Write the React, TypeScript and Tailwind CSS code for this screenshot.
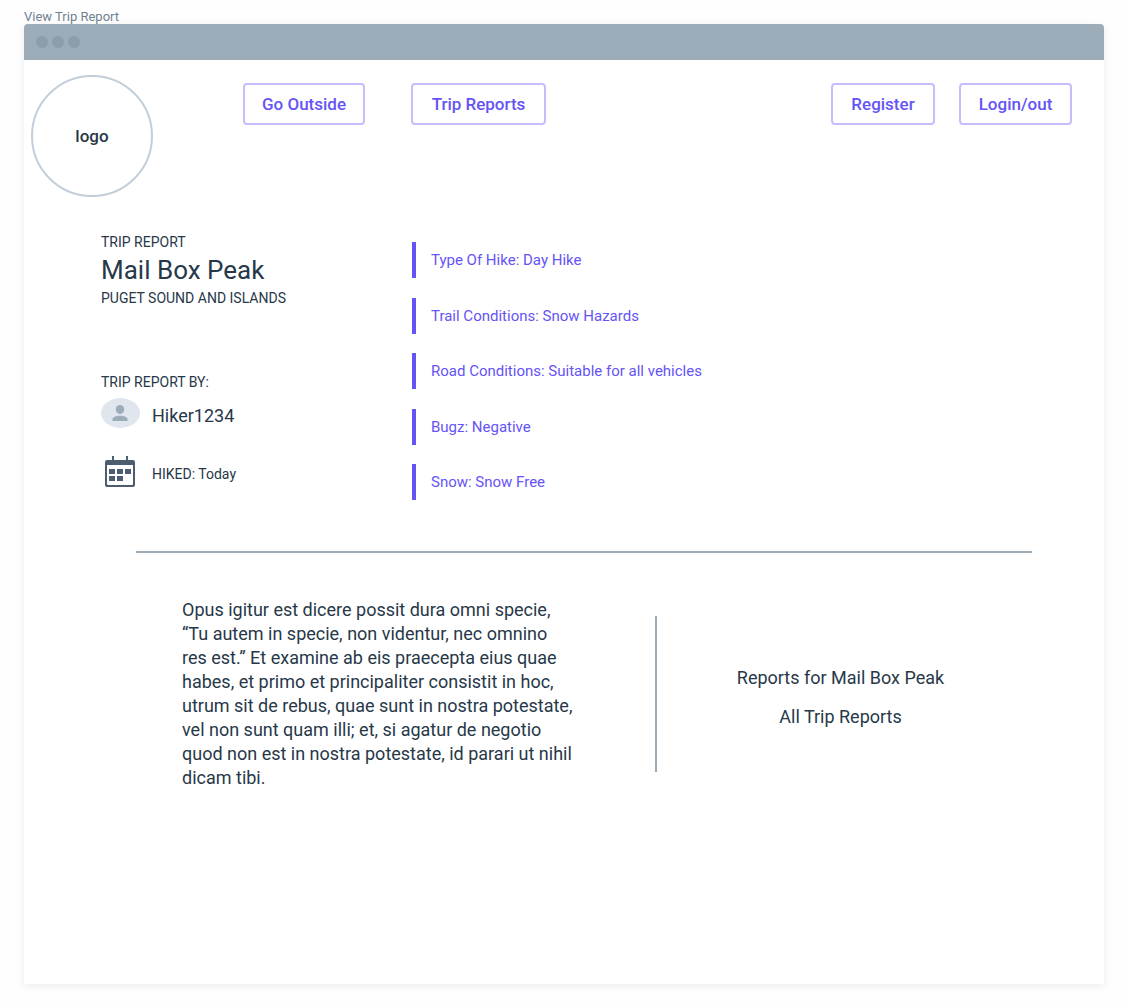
const conditions = [
  'Type Of Hike: Day Hike',
  'Trail Conditions: Snow Hazards',
  'Road Conditions: Suitable for all vehicles',
  'Bugz: Negative',
  'Snow: Snow Free',
];

function NavButton({ label, className }: { label: string; className: string }) {
  return (
    <button
      type="button"
      className={`h-[42px] rounded-[4px] border-2 border-[#c5befc] text-center text-[17px] leading-6 font-medium text-[#6554f5] ${className}`}
    >
      {label}
    </button>
  );
}

function Avatar() {
  return (
    <svg width="39" height="30" viewBox="0 0 39 30" aria-hidden="true">
      <ellipse cx="19.5" cy="15" rx="19.5" ry="15" fill="#dfe6ee" />
      <ellipse cx="19" cy="11.500" rx="4.200" ry="4.500" fill="#9dacb9" />
      <path d="M11.500 23v-2c0-2 3.500-3.300 7.500-3.300s7.500 1.300 7.500 3.300v2z" fill="#9dacb9" />
    </svg>
  );
}

function Calendar() {
  return (
    <svg width="30" height="31" viewBox="0 0 30 31" fill="#4b5d6e" aria-hidden="true">
      <path
        fillRule="evenodd"
        d="M7 0h2v4h12V0h2v4h5a2 2 0 0 1 2 2v23a2 2 0 0 1-2 2H2a2 2 0 0 1-2-2V6a2 2 0 0 1 2-2h5zM2 9v19a1 1 0 0 0 1 1h24a1 1 0 0 0 1-1V9z"
      />
      <path d="M4 13h6v5H4zM12 13h6v5h-6zM20 13h6v5h-6zM4 20h6v5H4zM12 20h6v5h-6z" />
    </svg>
  );
}

export default function App() {
  return (
    <div className="min-h-screen bg-[#fefefe] px-6 pt-2 pb-6 font-['Roboto',sans-serif] text-[#273849]">
      <div className="h-4 text-[13px] leading-[18px] text-[#6f8191]">View Trip Report</div>
      <div className="min-h-[calc(100vh-48px)] rounded-t-[4px] bg-white shadow-[0_2px_8px_rgba(0,0,0,0.08)]">
        <div className="flex h-9 items-center gap-1 rounded-t-[4px] bg-[#9dacb9] pl-3">
          <span className="size-3 rounded-full bg-[#8d9dac]" />
          <span className="size-3 rounded-full bg-[#8d9dac]" />
          <span className="size-3 rounded-full bg-[#8d9dac]" />
        </div>

        <header className="flex items-start pt-[15px] pr-8 pl-[7px]">
          <div className="flex size-[122px] shrink-0 items-center justify-center rounded-full border-2 border-[#c3ced9] text-[17px] leading-6 font-medium">
            logo
          </div>
          <nav className="flex flex-1 pt-2 pl-[90px]">
            <NavButton label="Go Outside" className="w-[122px]" />
            <NavButton label="Trip Reports" className="ml-[46px] w-[135px]" />
            <NavButton label="Register" className="ml-auto w-[104px]" />
            <NavButton label="Login/out" className="ml-6 w-[113px]" />
          </nav>
        </header>

        <main>
          <section className="flex pt-[35px] pl-[77px]">
            <div className="w-[311px] shrink-0">
              <div className="text-[14px] leading-5">TRIP REPORT</div>
              <h1 className="text-[26px] leading-9">Mail Box Peak</h1>
              <div className="text-[14px] leading-5">PUGET SOUND AND ISLANDS</div>
              <div className="mt-16 text-[14px] leading-5">TRIP REPORT BY:</div>
              <div className="mt-[6px] flex items-start gap-3">
                <Avatar />
                <span className="pt-[6px] text-[18px] leading-6">Hiker1234</span>
              </div>
              <div className="mt-7 flex items-center gap-[17px] pl-1">
                <Calendar />
                <span className="pt-1 text-[14px] leading-5">HIKED: Today</span>
              </div>
            </div>
            <ul className="flex h-[268px] flex-col justify-between pt-[10px] text-[15px] leading-5 text-[#6554f5]">
              {conditions.map((item) => (
                <li key={item} className="flex h-9 items-center border-l-4 border-[#6554f5] pl-[15px]">
                  {item}
                </li>
              ))}
            </ul>
          </section>

          <hr className="mt-[51px] mr-[72px] ml-28 border-t-2 border-[#9dacb9]" />

          <section className="flex pt-[45px] pr-20 pl-[158px] text-[18px] leading-6">
            <p className="w-[473px] shrink-0">
              Opus igitur est dicere possit dura omni specie,
              <br />
              “Tu autem in specie, non videntur, nec omnino
              <br />
              res est.” Et examine ab eis praecepta eius quae
              <br />
              habes, et primo et principaliter consistit in hoc,
              <br />
              utrum sit de rebus, quae sunt in nostra potestate,
              <br />
              vel non sunt quam illi; et, si agatur de negotio
              <br />
              quod non est in nostra potestate, id parari ut nihil
              <br />
              dicam tibi.
            </p>
            <div className="my-[18px] flex flex-1 flex-col items-center gap-[15px] border-l-2 border-[#9dacb9] pt-[50px]">
              <a href="#mail-box-peak">Reports for Mail Box Peak</a>
              <a href="#all">All Trip Reports</a>
            </div>
          </section>
        </main>
      </div>
    </div>
  );
}
